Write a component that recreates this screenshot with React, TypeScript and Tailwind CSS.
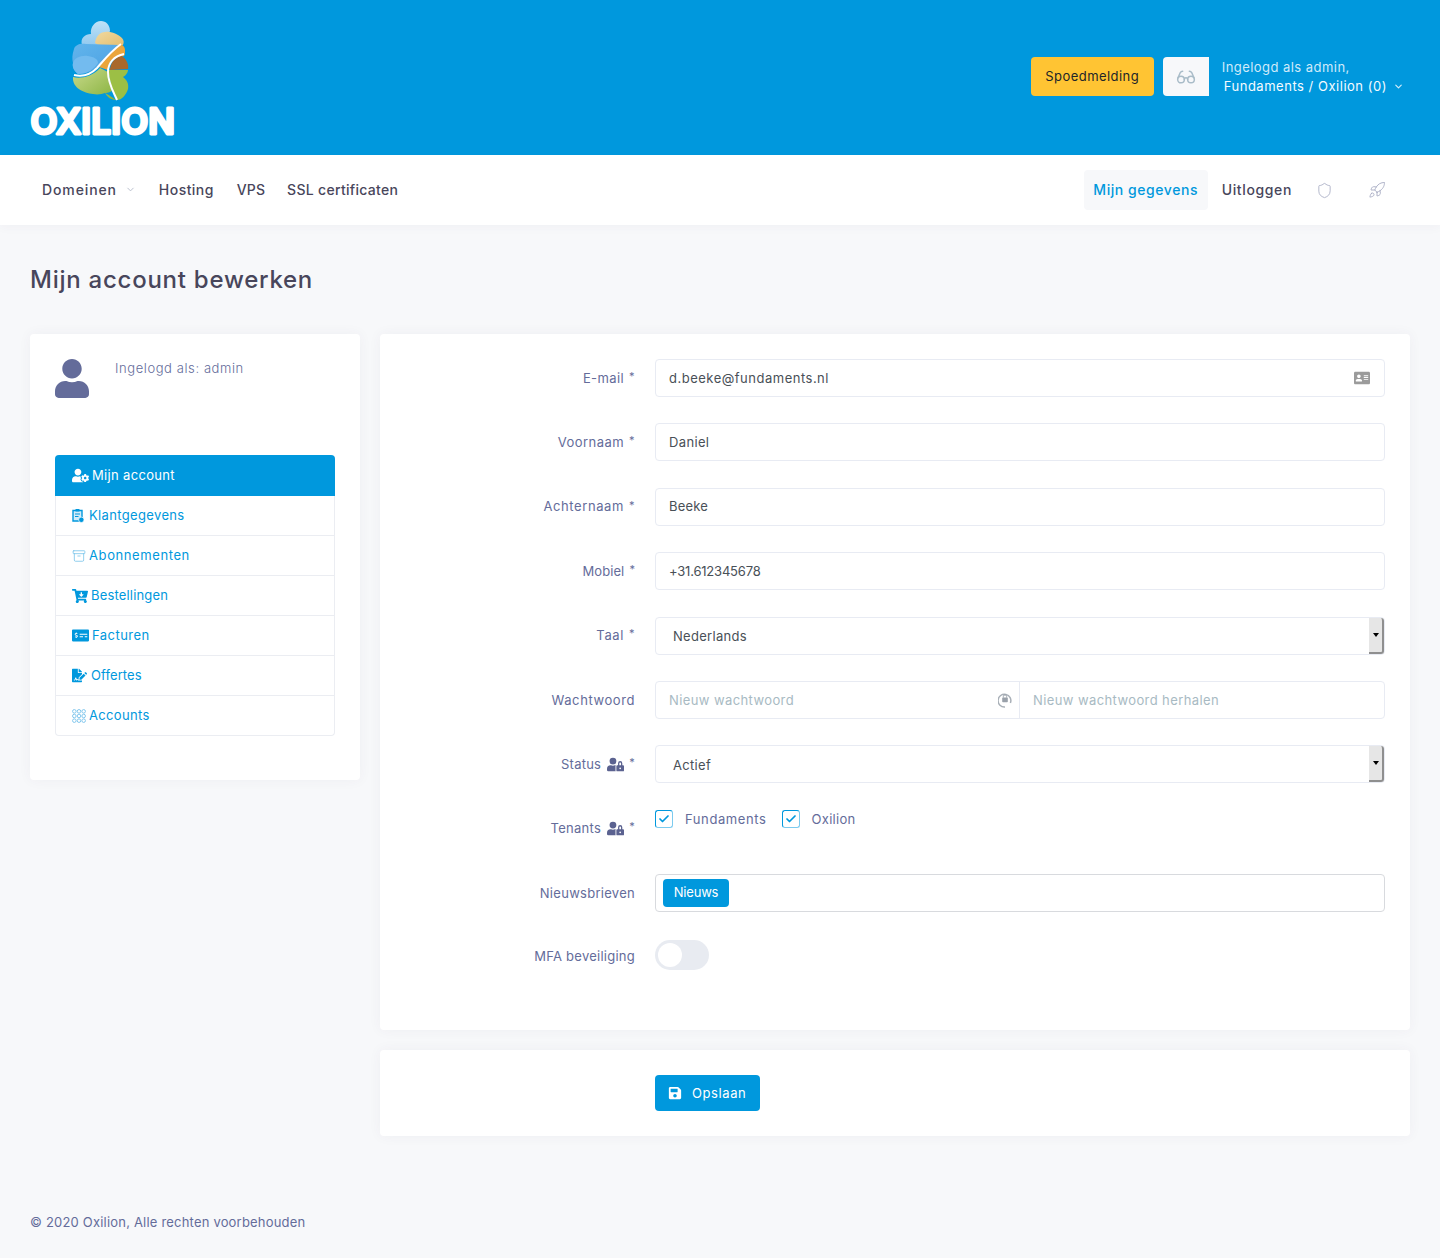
import React from "react";
import { Glasses, Shield, Rocket, ChevronDown, Archive, Check } from "lucide-react";
import { FaUser, FaUserCog, FaUserLock, FaAddressCard, FaSave, FaCartArrowDown, FaMoneyCheckAlt, FaFileSignature } from "react-icons/fa";

const font = "font-['Inter','Liberation_Sans',sans-serif]";

function Logo() {
  return (
    <svg width="170" height="130" viewBox="28 18 170 130" className="block">
      <defs>
        <linearGradient id="g1" x1="0" y1="0" x2="0" y2="1"><stop offset="0" stopColor="#bfe2f7" /><stop offset="1" stopColor="#8fc8ef" /></linearGradient>
        <linearGradient id="g2" x1="0" y1="0" x2="1" y2="1"><stop offset="0" stopColor="#62b5ec" /><stop offset="1" stopColor="#4a9fe2" /></linearGradient>
        <linearGradient id="g3" x1="0" y1="0" x2="1" y2="1"><stop offset="0" stopColor="#c9da8c" /><stop offset="1" stopColor="#84b03a" /></linearGradient>
        <linearGradient id="g4" x1="0" y1="0" x2="1" y2="1"><stop offset="0" stopColor="#f0d9a0" /><stop offset="1" stopColor="#e3bd6e" /></linearGradient>
      </defs>
      <path d="M82 44C80 37 85 33 91 33 90 26 95 20 101 20 106 20 110 24 110 30L100 46Z" fill="url(#g1)" />
      <path d="M95 42C96 35 100 31 105 31 110 30 118 33 122 37 124 39 124 42 123 44L118 46 100 45Z" fill="url(#g4)" />
      <path d="M74 48C75 44 80 42 86 43L120 44C112 49 105 58 99 64 94 69 88 73 78 73 75 71 72 66 73 62 72 58 72 54 74 48Z" fill="url(#g2)" />
      <path d="M73 62C74 57 81 54 88 55 94 56 98 58 98 62 94 68 88 73 78 73 74 70 72 66 73 62Z" fill="#73bbef" />
      <path d="M120 43C123 44 125 46 125 49 125 52 125 54 124 55L113 58C110 60 108 64 108 69L99 66C105 58 111 50 120 43Z" fill="#eba53b" />
      <path d="M110 69C110 62 115 56 122 55 126 58 129 63 128 68Z" fill="#a9682b" />
      <path d="M108 69H128C128 72 125 75 123 76 127 79 129 83 128 88 126 94 122 99 117 99 114 94 111 87 108 69Z" fill="#9cbf45" />
      <path d="M73 76C80 78 92 76 100 67L108 71C108 78 110 84 112 90 108 92 106 92 105 92 112 96 112 96 116 99 112 99 108 97 105 92 102 93 98 94 93 93 84 92 72 87 73 76Z" fill="url(#g3)" />
      <path d="M74 74C82 76 90 74 97 67 104 59 110 51 121 43" fill="none" stroke="#fff" strokeWidth="2" />
      <path d="M124 53C114 55 108 62 108 71 108 82 113 90 117 99" fill="none" stroke="#fff" strokeWidth="2" />
      <text x="30.5" y="133" letterSpacing="0.2" fontFamily="Inter, sans-serif" fontWeight="600" fontSize="35" fill="#fff" stroke="#fff" strokeWidth="3" strokeLinejoin="round">OXILION</text>
    </svg>
  );
}

function GridDots() {
  const pts = [2.5, 7.5, 12.5];
  return (
    <svg width="14" height="14" viewBox="0 0 15 15" fill="none" stroke="#7cc4ec" strokeWidth="1">
      {pts.map((y) => pts.map((x) => <circle key={`${x}-${y}`} cx={x} cy={y} r="1.9" />))}
    </svg>
  );
}

function ClipInfo() {
  return (
    <svg width="12" height="15" viewBox="0 0 12 15" fill="none">
      <path d="M1 2.5h9v10.5H1z" fill="#d3ecf9" stroke="#0098dd" strokeWidth="1.4" />
      <rect x="3.5" y="1" width="4" height="2.6" rx=".6" fill="#0098dd" />
      <path d="M3 6h5M3 8.5h3.5" stroke="#0098dd" strokeWidth="1.1" />
      <circle cx="9.3" cy="11.8" r="2.7" fill="#0098dd" stroke="#fff" strokeWidth=".7" />
    </svg>
  );
}

function LockCircle() {
  return (
    <svg width="14" height="16" viewBox="0 0 14 16" fill="none">
      <path d="M7 15A6.4 6.4 0 1 1 12.4 11" stroke="#a9b0b8" strokeWidth="1.5" />
      <rect x="4.2" y="5.6" width="5.6" height="4.6" rx=".8" fill="#9aa1aa" />
      <path d="M5.3 5.6V4.6a1.7 1.7 0 0 1 3.4 0v1" stroke="#9aa1aa" strokeWidth="1" />
    </svg>
  );
}

const Star = () => <span className="ml-[5px] text-[11px] relative top-[-2px] text-[#646c9a]">*</span>;

function Row({ label, req, lock, track = "tracking-[0.585px]", children, cls = "mb-[26.4px]" }: { label: string; req?: boolean; lock?: boolean; track?: string; children: React.ReactNode; cls?: string }) {
  return (
    <div className={`flex gap-5 ${cls}`}>
      <div className={`w-[230px] h-[38px] flex items-center justify-end text-[13px] ${track} text-[#646c9a]`}>
        <span className="relative top-[0.4px]">{label}</span>
        {lock && <FaUserLock className="ml-[6px] text-[17px] text-[#5b6290]" />}
        {req && <Star />}
      </div>
      <div className="flex-1 min-w-0">{children}</div>
    </div>
  );
}

function Field({ value, right, track = "tracking-[0.5px]" }: { value: string; right?: React.ReactNode; track?: string }) {
  return (
    <div className={`h-[38px] border border-[#e8ebf3] rounded bg-white pl-[13px] pr-[14px] flex items-center justify-between text-[13px] ${track} text-[#495057]`}>
      <span className="relative top-[0.4px]">{value}</span>
      {right}
    </div>
  );
}

function SelectField({ value }: { value: string }) {
  return (
    <div className="relative h-[38px] border border-[#e8ebf3] rounded bg-white pl-[17px] flex items-center text-[13px] tracking-[0.3px] text-[#495057]">
      <span className="relative top-[1px]">{value}</span>
      <div className="absolute right-0 top-0 bottom-0 w-[15px] bg-[#e6e6e6] border-r-2 border-b-2 border-[#8f8f8f] rounded-r-[3px] flex items-center justify-center">
        <span className="w-0 h-0 border-x-[3px] border-x-transparent border-t-[4px] border-t-black" />
      </div>
    </div>
  );
}

function Check2() {
  return (
    <span className="w-[18px] h-[18px] border border-[#0098dd] border-r-[#7ccbef] border-b-[#7ccbef] rounded-[3px] bg-white flex items-center justify-center">
      <Check size={12} strokeWidth={3.5} className="text-[#0098dd]" />
    </span>
  );
}

const menu: { icon: React.ReactNode; label: string; gap: string; track: string }[] = [
  { icon: <ClipInfo />, label: "Klantgegevens", gap: "gap-[5px]", track: "tracking-[0.35px]" },
  { icon: <Archive size={14} strokeWidth={1.3} className="text-[#6fbfe9]" />, label: "Abonnementen", gap: "gap-[3px]", track: "tracking-[0.6px]" },
  { icon: <FaCartArrowDown className="text-[16px]" />, label: "Bestellingen", gap: "gap-[3px]", track: "tracking-[0.17px]" },
  { icon: <FaMoneyCheckAlt className="text-[17px]" />, label: "Facturen", gap: "gap-[3px]", track: "tracking-[0.45px]" },
  { icon: <FaFileSignature className="text-[15px]" />, label: "Offertes", gap: "gap-[4px]", track: "tracking-[0.1px]" },
  { icon: <GridDots />, label: "Accounts", gap: "gap-[3px]", track: "tracking-[0.33px]" },
];

export default function App() {
  return (
    <div className={`min-h-[1258px] bg-[#f7f8fa] ${font}`}>
      <header className="h-[155px] bg-[#0098dd] flex items-center justify-between pl-[28px] pr-[36px]">
        <div className="pt-[13px]"><Logo /></div>
        <div className="flex items-center h-[39px] relative top-[-1px]">
          <button className="h-[39px] w-[123px] rounded bg-[#ffc433] text-[13px] tracking-[0.45px] text-[#212529]">Spoedmelding</button>
          <div className="ml-[9px] h-[39px] w-[46px] rounded-l bg-[#f7f8fa] flex items-center justify-center">
            <Glasses size={20} strokeWidth={1.8} className="text-[#a9bcc8]" />
          </div>
          <div className="ml-[13px] text-[13px] leading-[19px]">
            <div className="text-[#cfeafa] tracking-[0.45px]">Ingelogd als admin,</div>
            <div className="pl-[2px] text-[#f4fbff] flex items-center tracking-[0.52px]">Fundaments / Oxilion (0)<ChevronDown size={11} strokeWidth={2.5} className="ml-[6px] text-[#d5eefb]" /></div>
          </div>
        </div>
      </header>

      <nav className="h-[70px] bg-white shadow-[0_2px_10px_rgba(82,63,105,0.04)] flex items-center justify-between pl-[42px] pr-[54px] text-[14px] font-medium text-[#48465b]">
        <div className="flex items-center relative top-[-1px]">
          <span className="tracking-[0.88px]">Domeinen</span>
          <ChevronDown size={11} className="ml-[8px] text-[#b5bac9]" />
          <span className="ml-[23px] tracking-[0.45px]">Hosting</span>
          <span className="ml-[23px] tracking-[0.1px]">VPS</span>
          <span className="ml-[22px] tracking-[0.3px]">SSL certificaten</span>
        </div>
        <div className="flex items-center">
          <span className="h-[40px] w-[124px] rounded bg-[#f7f8fa] text-[#0098dd] tracking-[0.55px] flex items-center justify-center"><span className="relative top-[-1px]">Mijn gegevens</span></span>
          <span className="ml-[14px] tracking-[0.63px] relative top-[-1px]">Uitloggen</span>
          <Shield size={17} strokeWidth={1.2} className="ml-[24px] text-[#a7abc3]" />
          <Rocket size={18} strokeWidth={1.2} className="ml-[35px] text-[#a7abc3]" />
        </div>
      </nav>

      <main className="px-[30px]">
        <h1 className="pt-[38px] h-[109px] text-[24px] leading-[34px] font-medium tracking-[0.75px] text-[#48465b]">Mijn account bewerken</h1>
        <div className="flex gap-5 items-start">
          <aside className="w-[330px] h-[446px] bg-white rounded shadow-[0_0_13px_rgba(82,63,105,0.05)] p-[25px]">
            <div className="flex h-[96px]">
              <FaUser className="text-[#646c9a] w-[34px] h-[39px]" />
              <div className="ml-[26px] text-[13px] tracking-[0.585px] font-light text-[#646c9a] leading-[18px]">Ingelogd als: admin</div>
            </div>
            <div className="border border-[#ebedf2] border-t-0 rounded text-[13px] text-[#0098dd]">
              <div className="h-[41px] -mx-px rounded-t bg-[#0098dd] text-white flex items-center pl-[17px] gap-[3px] tracking-[0.33px]">
                <FaUserCog className="text-[17px]" />
                <span>Mijn account</span>
              </div>
              {menu.map((m, i) => (
                <div key={m.label} className={`flex items-center pl-[16px] ${m.gap} ${m.track} ${i < menu.length - 1 ? "h-[40px] border-b border-[#ebedf2]" : "h-[39px]"}`}>
                  {m.icon}
                  <span>{m.label}</span>
                </div>
              ))}
            </div>
          </aside>

          <div className="flex-1 min-w-0 flex flex-col gap-5">
            <section className="h-[696px] bg-white rounded shadow-[0_0_13px_rgba(82,63,105,0.05)] px-[25px] pt-[25px]">
              <Row label="E-mail" req track="tracking-[0.4px]"><Field value="d.beeke@fundaments.nl" right={<FaAddressCard className="text-[16px] text-[#9b9b9b]" />} /></Row>
              <Row label="Voornaam" req track="tracking-[0.45px]"><Field value="Daniel" track="tracking-[0.35px]" /></Row>
              <Row label="Achternaam" req><Field value="Beeke" track="tracking-[0.2px]" /></Row>
              <Row label="Mobiel" req track="tracking-[0.1px]"><Field value="+31.612345678" track="tracking-[-0.2px]" /></Row>
              <Row label="Taal" req><SelectField value="Nederlands" /></Row>
              <Row label="Wachtwoord">
                <div className="flex h-[38px] border border-[#e8ebf3] rounded text-[13px] tracking-[0.4px] text-[#a8bac3]">
                  <div className="w-[364px] border-r border-[#e8ebf3] pl-[13px] pr-[7px] flex items-center justify-between">
                    <span className="relative top-[0.4px]">Nieuw wachtwoord</span>
                    <LockCircle />
                  </div>
                  <div className="flex-1 px-[13px] flex items-center"><span className="relative top-[0.4px]">Nieuw wachtwoord herhalen</span></div>
                </div>
              </Row>
              <Row label="Status" req lock track="tracking-[0.25px]"><SelectField value="Actief" /></Row>
              <div className="flex gap-5 h-[64.4px]">
                <div className="w-[230px] h-[38px] flex items-end justify-end text-[13px] tracking-[0.3px] text-[#646c9a]">
                  <span className="flex items-center h-[28px] relative top-[-5px]">
                    <span>Tenants</span>
                    <FaUserLock className="ml-[6px] text-[17px] text-[#5b6290]" />
                    <Star />
                  </span>
                </div>
                <div className="flex items-start text-[13px] text-[#646c9a]">
                  <Check2 /><span className="ml-[12px] leading-[18px] tracking-[0.6px]">Fundaments</span>
                  <span className="ml-[15px]"><Check2 /></span><span className="ml-[12px] leading-[18px] tracking-[0.3px]">Oxilion</span>
                </div>
              </div>
              <Row label="Nieuwsbrieven" track="tracking-[0.28px]">
                <div className="h-[38px] border border-[#d8dade] rounded bg-white flex items-center pl-[7px]">
                  <span className="h-[28px] w-[66px] rounded bg-[#0098dd] text-white text-[13px] tracking-[-0.2px] flex items-center justify-center">Nieuws</span>
                </div>
              </Row>
              <div className="flex gap-5 items-center pt-[1px]">
                <div className="w-[230px] text-right text-[13px] tracking-[0.25px] text-[#646c9a] relative top-[2px]">MFA beveiliging</div>
                <div className="w-[54px] h-[30px] rounded-full bg-[#e8ebf1] p-[3px]">
                  <div className="w-[24px] h-[24px] rounded-full bg-white" />
                </div>
              </div>
            </section>
            <section className="h-[86px] bg-white rounded shadow-[0_0_13px_rgba(82,63,105,0.05)] pl-[275px] pt-[25px]">
              <button className="h-[36px] w-[105px] rounded bg-[#0098dd] text-white text-[13px] tracking-[0.585px] flex items-center pl-[13px] gap-[10px]">
                <FaSave className="text-[14px]" />
                <span className="relative top-[0.5px]">Opslaan</span>
              </button>
            </section>
          </div>
        </div>
        <footer className="pt-[76px] text-[13px] tracking-[0.195px] text-[#646c9a] leading-[20px]">© 2020 Oxilion, Alle rechten voorbehouden</footer>
      </main>
    </div>
  );
}
